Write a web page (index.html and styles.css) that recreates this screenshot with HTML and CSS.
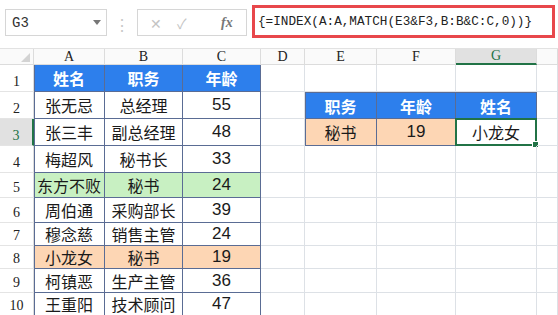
FILE: index.html
```html
<!DOCTYPE html>
<html lang="zh">
<head>
    <meta charset="UTF-8">
    <title>INDEX MATCH</title>
    <link rel="stylesheet" href="styles.css">
</head>
<body>
    <div class="toolbar">
        <div class="name-box">
            <span>G3</span>
            <span class="arrow"></span>
        </div>
        <div class="dots">⋮</div>
        <div class="fx-box">
            <span class="icon-x">✕</span>
            <span class="icon-ok">✓</span>
            <span class="icon-fx">fx</span>
        </div>
        <div class="formula">{=INDEX(A:A,MATCH(E3&amp;F3,B:B&amp;C:C,0))}</div>
    </div>

    <div class="sheet">
        <!-- column headers -->
        <div class="corner"><span class="tri"></span></div>
        <div class="ch">A</div>
        <div class="ch">B</div>
        <div class="ch">C</div>
        <div class="ch">D</div>
        <div class="ch">E</div>
        <div class="ch">F</div>
        <div class="ch active">G</div>
        <div class="ch"></div>

        <!-- row 1 -->
        <div class="rh">1</div>
        <div class="c t tl head">姓名</div>
        <div class="c t head">职务</div>
        <div class="c t head">年龄</div>
        <div class="c"></div>
        <div class="c"></div>
        <div class="c"></div>
        <div class="c"></div>
        <div class="c"></div>

        <!-- row 2 -->
        <div class="rh">2</div>
        <div class="c t tl">张无忌</div>
        <div class="c t">总经理</div>
        <div class="c t num">55</div>
        <div class="c"></div>
        <div class="c t tl tt head">职务</div>
        <div class="c t tt head">年龄</div>
        <div class="c t tt head">姓名</div>
        <div class="c"></div>

        <!-- row 3 -->
        <div class="rh active">3</div>
        <div class="c t tl">张三丰</div>
        <div class="c t">副总经理</div>
        <div class="c t num">48</div>
        <div class="c"></div>
        <div class="c t tl peach">秘书</div>
        <div class="c t peach num">19</div>
        <div class="c selected">小龙女<span class="handle"></span></div>
        <div class="c"></div>

        <!-- row 4 -->
        <div class="rh">4</div>
        <div class="c t tl">梅超风</div>
        <div class="c t">秘书长</div>
        <div class="c t num">33</div>
        <div class="c"></div>
        <div class="c"></div>
        <div class="c"></div>
        <div class="c"></div>
        <div class="c"></div>

        <!-- row 5 -->
        <div class="rh">5</div>
        <div class="c t tl green">东方不败</div>
        <div class="c t green">秘书</div>
        <div class="c t green num">24</div>
        <div class="c"></div>
        <div class="c"></div>
        <div class="c"></div>
        <div class="c"></div>
        <div class="c"></div>

        <!-- row 6 -->
        <div class="rh">6</div>
        <div class="c t tl">周伯通</div>
        <div class="c t">采购部长</div>
        <div class="c t num">39</div>
        <div class="c"></div>
        <div class="c"></div>
        <div class="c"></div>
        <div class="c"></div>
        <div class="c"></div>

        <!-- row 7 -->
        <div class="rh">7</div>
        <div class="c t tl">穆念慈</div>
        <div class="c t">销售主管</div>
        <div class="c t num">24</div>
        <div class="c"></div>
        <div class="c"></div>
        <div class="c"></div>
        <div class="c"></div>
        <div class="c"></div>

        <!-- row 8 -->
        <div class="rh">8</div>
        <div class="c t tl peach">小龙女</div>
        <div class="c t peach">秘书</div>
        <div class="c t peach num">19</div>
        <div class="c"></div>
        <div class="c"></div>
        <div class="c"></div>
        <div class="c"></div>
        <div class="c"></div>

        <!-- row 9 -->
        <div class="rh">9</div>
        <div class="c t tl">柯镇恶</div>
        <div class="c t">生产主管</div>
        <div class="c t num">36</div>
        <div class="c"></div>
        <div class="c"></div>
        <div class="c"></div>
        <div class="c"></div>
        <div class="c"></div>

        <!-- row 10 -->
        <div class="rh">10</div>
        <div class="c t tl">王重阳</div>
        <div class="c t">技术顾问</div>
        <div class="c t num">47</div>
        <div class="c"></div>
        <div class="c"></div>
        <div class="c"></div>
        <div class="c"></div>
        <div class="c"></div>
    </div>
</body>
</html>
```

FILE: styles.css
```css
body {
    margin: 0;
    width: 558px;
    height: 315px;
    overflow: hidden;
    background-color: #fff;
    font-family: "Noto Sans CJK SC", "Liberation Sans", sans-serif;
    color: #1a1a1a;
}

/* formula bar */
.toolbar {
    height: 48px;
    display: flex;
    align-items: flex-start;
    box-sizing: border-box;
    padding-left: 5px;
}

.name-box {
    width: 102px;
    height: 27px;
    margin-top: 9px;
    border: 1px solid #d6d6d6;
    box-sizing: border-box;
    display: flex;
    align-items: center;
    justify-content: space-between;
    padding: 0 5px 0 6px;
    font-family: "Liberation Mono", monospace;
    font-size: 14px;
    color: #333;
}

.arrow {
    width: 0;
    height: 0;
    border-left: 4px solid transparent;
    border-right: 4px solid transparent;
    border-top: 5px solid #777;
}

.dots {
    width: 30px;
    margin-top: 12px;
    text-align: center;
    color: #c8c8c8;
    font-size: 16px;
}

.fx-box {
    width: 110px;
    height: 27px;
    margin-top: 9px;
    border: 1px solid #d6d6d6;
    box-sizing: border-box;
    display: flex;
    align-items: center;
    padding: 0 6px 0 12px;
    color: #c4c4c4;
    font-size: 14px;
}

.icon-x {
    width: 27px;
}

.icon-ok {
    width: 44px;
}

.icon-fx {
    font-family: "Liberation Serif", serif;
    font-style: italic;
    font-weight: bold;
    color: #777;
    font-size: 14px;
}

.formula {
    width: 303px;
    height: 33px;
    margin-top: 5px;
    margin-left: 5px;
    border: 3px solid #e8474b;
    box-sizing: border-box;
    display: flex;
    align-items: center;
    padding-left: 3px;
    font-family: "Liberation Mono", monospace;
    font-size: 12.7px;
    color: #222;
    white-space: nowrap;
}

/* spreadsheet grid */
.sheet {
    display: grid;
    grid-template-columns: 34px 71px 78px 78px 44px 72px 79px 81px 21px;
    grid-template-rows: 16px 27px 27px 27px 27px 25px 25px 23px 23px 24px 23px;
    border-top: 1px solid #e2e2e2;
}

.corner {
    position: relative;
    border-right: 1px solid #dcdcdc;
    border-bottom: 1px solid #dcdcdc;
    background-color: #fafafa;
}

.tri {
    position: absolute;
    right: 3px;
    bottom: 2px;
    width: 0;
    height: 0;
    border-left: 9px solid transparent;
    border-bottom: 9px solid #d3d3d3;
}

.ch {
    display: flex;
    align-items: center;
    justify-content: center;
    border-right: 1px solid #dcdcdc;
    border-bottom: 1px solid #dcdcdc;
    background-color: #fafafa;
    font-family: "Liberation Serif", serif;
    font-size: 14px;
    color: #222;
}

.ch.active {
    background-color: #e1e1e1;
    border-bottom: 2px solid #217346;
    color: #217346;
}

.rh {
    display: flex;
    align-items: flex-end;
    justify-content: center;
    padding-bottom: 1px;
    box-sizing: border-box;
    border-right: 1px solid #dcdcdc;
    border-bottom: 1px solid #e4e4e4;
    font-family: "Liberation Serif", serif;
    font-size: 14px;
    color: #222;
}

.rh.active {
    background-color: #e1e1e1;
    border-right: 2px solid #217346;
    color: #217346;
}

.c {
    display: flex;
    align-items: center;
    justify-content: center;
    box-sizing: border-box;
    border-right: 1px solid #dde1e6;
    border-bottom: 1px solid #dde1e6;
    font-size: 16px;
    white-space: nowrap;
    position: relative;
}

.t {
    border-right-color: #5a6c94;
    border-bottom-color: #5a6c94;
}

.tl {
    box-shadow: inset 1px 0 #5a6c94;
}

.tt {
    border-top: 1px solid #5a6c94;
}

.head {
    background-color: #2d7fec;
    color: #fff;
    font-weight: bold;
}

.num {
    font-family: "Liberation Sans", sans-serif;
    font-size: 17px;
}

.green {
    background-color: #c8f0c2;
}

.peach {
    background-color: #fdd6b4;
}

.selected {
    border: 2px solid #217346;
    margin: -1px 0 0 -1px;
}

.handle {
    position: absolute;
    right: -4px;
    bottom: -4px;
    width: 5px;
    height: 5px;
    background-color: #217346;
    border: 1px solid #fff;
}
```
